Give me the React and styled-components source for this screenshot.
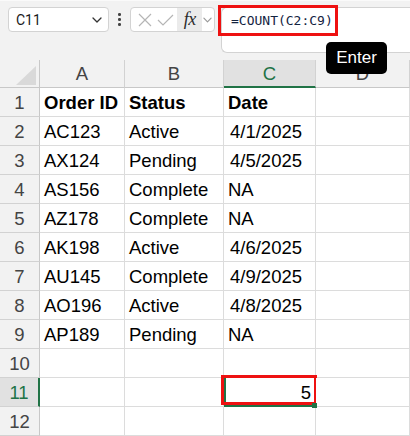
import React from "react";
import styled, { createGlobalStyle } from "styled-components";

const Global = createGlobalStyle`
  html, body { margin: 0; padding: 0; background: #f2f2f2; }
  body { width: 410px; height: 436px; overflow: hidden; font-family: "Liberation Sans", Arial, sans-serif; }
`;

const Page = styled.div`
  position: relative;
  width: 410px;
  height: 436px;
  overflow: hidden;
  background: #f2f2f2;
`;

const Toolbar = styled.div`
  height: 60px;
  box-sizing: border-box;
  display: flex;
  align-items: flex-start;
  padding: 7px 0 0 8px;
  border-top: 1px solid #fafafa;
`;

const Box = styled.div`
  box-sizing: border-box;
  height: 25px;
  margin-top: -1px;
  background: #fff;
  border: 1px solid #d3d3d3;
  border-radius: 4px;
  display: flex;
  align-items: center;
`;

const NameBox = styled(Box)`
  width: 101px;
  padding: 0 6px 0 7px;
  justify-content: space-between;
  font-family: Roboto, "Liberation Sans", sans-serif;
  font-size: 14px;
  color: #1a1a1a;
`;

const Kebab = styled.div`
  width: 21px;
  height: 25px;
  margin-top: -1px;
  display: flex;
  flex-direction: column;
  align-items: center;
  justify-content: center;
  gap: 2.5px;
  & > span {
    width: 2.5px;
    height: 2.5px;
    border-radius: 50%;
    background: #444;
  }
`;

const EditGroup = styled(Box)`
  width: 85px;
  padding: 0 2px 0 4px;
  overflow: hidden;
`;

const IconSlot = styled.div`
  width: ${(p) => p.$w}px;
  height: 23px;
  display: flex;
  align-items: center;
  justify-content: center;
  background: ${(p) => p.$bg || "transparent"};
`;

const Fx = styled.span`
  font-family: "Liberation Serif", "DejaVu Serif", serif;
  font-style: italic;
  font-size: 18px;
  color: #2b2b2b;
  letter-spacing: -0.5px;
`;

const FormulaBar = styled.div`
  flex: 1;
  margin-left: 6px;
  margin-top: -1px;
  height: 46px;
  box-sizing: border-box;
  background: #fff;
  border: 1px solid #d3d3d3;
  border-right: none;
  border-radius: 6px 0 0 6px;
`;

const FormulaText = styled.div`
  display: inline-block;
  box-sizing: border-box;
  margin: -3px 0 0 -4px;
  width: 120px;
  height: 31px;
  border: 3px solid #ee1111;
  padding-left: 10px;
  font-family: "DejaVu Sans Mono", "Liberation Mono", monospace;
  font-size: 13px;
  line-height: 25px;
  color: #13233f;
`;

const Tooltip = styled.div`
  position: absolute;
  left: 326px;
  top: 42px;
  width: 61px;
  height: 32px;
  box-sizing: border-box;
  background: #000;
  border-radius: 5px;
  color: #fff;
  font-size: 17px;
  display: flex;
  align-items: center;
  justify-content: center;
  padding-bottom: 1px;
`;

const Sheet = styled.div`
  display: grid;
  grid-template-columns: 40px 85px 99px 92px 94px;
  grid-template-rows: 28px repeat(12, 29px);
  font-size: 18.5px;
`;

const Corner = styled.div`
  box-sizing: border-box;
  background: #f2f2f2;
  border-right: 1px solid #c8c8c8;
  border-bottom: 1px solid #c8c8c8;
  display: flex;
  align-items: flex-end;
  justify-content: flex-end;
  padding: 0 3px 2px 0;
`;

const ColHead = styled.div`
  box-sizing: border-box;
  background: ${(p) => (p.$active ? "#e1e1e1" : "#f2f2f2")};
  color: ${(p) => (p.$active ? "#217346" : "#444")};
  border-right: 1px solid #d2d2d2;
  border-bottom: ${(p) => (p.$active ? "2px solid #217346" : "1px solid #c8c8c8")};
  display: flex;
  align-items: center;
  justify-content: center;
  padding-top: ${(p) => (p.$active ? "1px" : "0")};
`;

const RowHead = styled.div`
  box-sizing: border-box;
  background: ${(p) => (p.$active ? "#e1e1e1" : "#f2f2f2")};
  color: ${(p) => (p.$active ? "#217346" : "#444")};
  border-right: ${(p) => (p.$active ? "2px solid #217346" : "1px solid #c8c8c8")};
  border-bottom: 1px solid #d2d2d2;
  display: flex;
  align-items: center;
  justify-content: center;
  padding-top: 2px;
`;

const Cell = styled.div`
  position: relative;
  box-sizing: border-box;
  background: #fff;
  color: #000;
  border-right: 1px solid #dcdcdc;
  border-bottom: 1px solid #dcdcdc;
  display: flex;
  align-items: center;
  justify-content: ${(p) => (p.$num ? "flex-end" : "flex-start")};
  padding: 2px 4px 0 ${(p) => (p.$indent ? 6 : 4)}px;
  font-weight: ${(p) => (p.$bold ? 700 : 400)};
  white-space: nowrap;
`;

const SelectedCell = styled(Cell)`
  &::before {
    content: "";
    position: absolute;
    left: 0;
    top: -1px;
    right: -1px;
    bottom: -1px;
    border-left: 2px solid #217346;
    border-bottom: 2px solid #217346;
  }
  &::after {
    content: "";
    position: absolute;
    left: -3px;
    top: -3px;
    right: -2px;
    bottom: 1px;
    border: 3px solid #ee1111;
  }
`;

const FillHandle = styled.span`
  position: absolute;
  right: -2px;
  bottom: -2px;
  width: 5px;
  height: 5px;
  background: #217346;
  z-index: 2;
`;

const data = [
  ["Order ID", "Status", "Date"],
  ["AC123", "Active", "4/1/2025"],
  ["AX124", "Pending", "4/5/2025"],
  ["AS156", "Complete", "NA"],
  ["AZ178", "Complete", "NA"],
  ["AK198", "Active", "4/6/2025"],
  ["AU145", "Complete", "4/9/2025"],
  ["AO196", "Active", "4/8/2025"],
  ["AP189", "Pending", "NA"],
  ["", "", ""],
  ["", "", "5"],
  ["", "", ""],
];

const Chevron = ({ color = "#333", w = 10 }) => (
  <svg width={w} height="6" viewBox="0 0 10 6">
    <path d="M1 1l4 4 4-4" fill="none" stroke={color} strokeWidth="1.3" strokeLinecap="round" strokeLinejoin="round" />
  </svg>
);

export default function App() {
  return (
    <Page>
      <Global />
      <Toolbar>
        <NameBox>
          <span>C11</span>
          <Chevron />
        </NameBox>
        <Kebab>
          <span />
          <span />
          <span />
        </Kebab>
        <EditGroup>
          <IconSlot $w={20}>
            <svg width="14" height="14" viewBox="0 0 14 14">
              <path d="M1 1l12 12M13 1L1 13" stroke="#b5b5b5" strokeWidth="1.2" />
            </svg>
          </IconSlot>
          <IconSlot $w={24}>
            <svg width="17" height="12" viewBox="0 0 17 12">
              <path d="M1 6l5 5L16 1" fill="none" stroke="#b5b5b5" strokeWidth="1.2" />
            </svg>
          </IconSlot>
          <IconSlot $w={26} $bg="#ebebeb">
            <Fx>fx</Fx>
          </IconSlot>
          <IconSlot $w={10}>
            <Chevron color="#999" w={9} />
          </IconSlot>
        </EditGroup>
        <FormulaBar>
          <FormulaText>=COUNT(C2:C9)</FormulaText>
        </FormulaBar>
      </Toolbar>
      <Sheet>
        <Corner>
          <svg width="20" height="19" viewBox="0 0 20 19">
            <path d="M20 0V19H0Z" fill="#d9d9d9" />
          </svg>
        </Corner>
        {["A", "B", "C", "D"].map((c) => (
          <ColHead key={c} $active={c === "C"}>
            {c}
          </ColHead>
        ))}
        {data.map((row, i) => (
          <React.Fragment key={i}>
            <RowHead $active={i === 10}>{i + 1}</RowHead>
            <Cell $bold={i === 0}>{row[0]}</Cell>
            <Cell $bold={i === 0}>{row[1]}</Cell>
            {i === 10 ? (
              <SelectedCell $num>
                {row[2]}
                <FillHandle />
              </SelectedCell>
            ) : (
              <Cell $bold={i === 0} $indent={/\d/.test(row[2])}>
                {row[2]}
              </Cell>
            )}
            <Cell />
          </React.Fragment>
        ))}
      </Sheet>
      <Tooltip>Enter</Tooltip>
    </Page>
  );
}
